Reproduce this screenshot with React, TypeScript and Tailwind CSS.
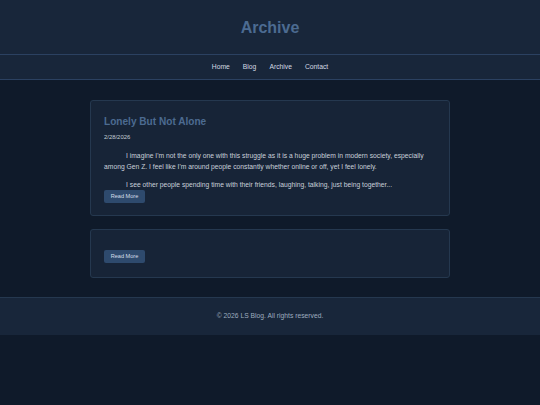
import React from "react";

export default function App() {
  return (
    <div className="min-h-[405px] bg-[#0f1a2a] font-['Liberation_Sans',Arial,sans-serif] antialiased">
      <header className="h-[55px] bg-[#18263a] border-b border-[#2b4161] flex items-center justify-center pt-[1px]">
        <h1 className="text-[16px] font-bold text-[#4c6b91] leading-none">Archive</h1>
      </header>
      <nav className="h-[25px] bg-[#18263a] border-b border-[#2b4161] flex items-center justify-center gap-[13px] text-[6.75px] text-[#d3d9e2]">
        <span>Home</span>
        <span>Blog</span>
        <span>Archive</span>
        <span>Contact</span>
      </nav>
      <main className="pt-[20px] pb-[19px] flex flex-col items-center gap-[13px]">
        <article className="w-[360px] h-[116px] bg-[#172437] border border-[#25384f] rounded-[3px] px-[13px] pt-[14px]">
          <h2 className="text-[10.1px] leading-[14px] font-bold text-[#4c6b91]">Lonely But Not Alone</h2>
          <p className="mt-[4px] text-[5.9px] leading-[9px] text-[#c5ccd6]">2/28/2026</p>
          <div className="mt-[8px] text-[6.75px] leading-[11px] text-[#c9d0da]">
            <p className="indent-[22px]">
              I imagine I'm not the only one with this struggle as it is a huge problem in modern society, especially among Gen Z. I feel like I'm around people constantly whether online or off, yet I feel lonely.
            </p>
            <p className="indent-[22px] mt-[7px]">
              I see other people spending time with their friends, laughing, talking, just being together...
            </p>
          </div>
          <button className="h-[13px] w-[41px] rounded-[2px] bg-[#2e4a6d] text-[5.6px] text-[#d4dde8] flex items-center justify-center">
            Read More
          </button>
        </article>
        <article className="w-[360px] h-[49px] bg-[#172437] border border-[#25384f] rounded-[3px] px-[13px] pt-[20px]">
          <button className="h-[13px] w-[41px] rounded-[2px] bg-[#2e4a6d] text-[5.6px] text-[#d4dde8] flex items-center justify-center">
            Read More
          </button>
        </article>
      </main>
      <footer className="h-[38px] bg-[#18263a] border-t border-[#25384f] flex items-center justify-center text-[6.75px] text-[#9eacbf]">
        © 2026 LS Blog. All rights reserved.
      </footer>
    </div>
  );
}
